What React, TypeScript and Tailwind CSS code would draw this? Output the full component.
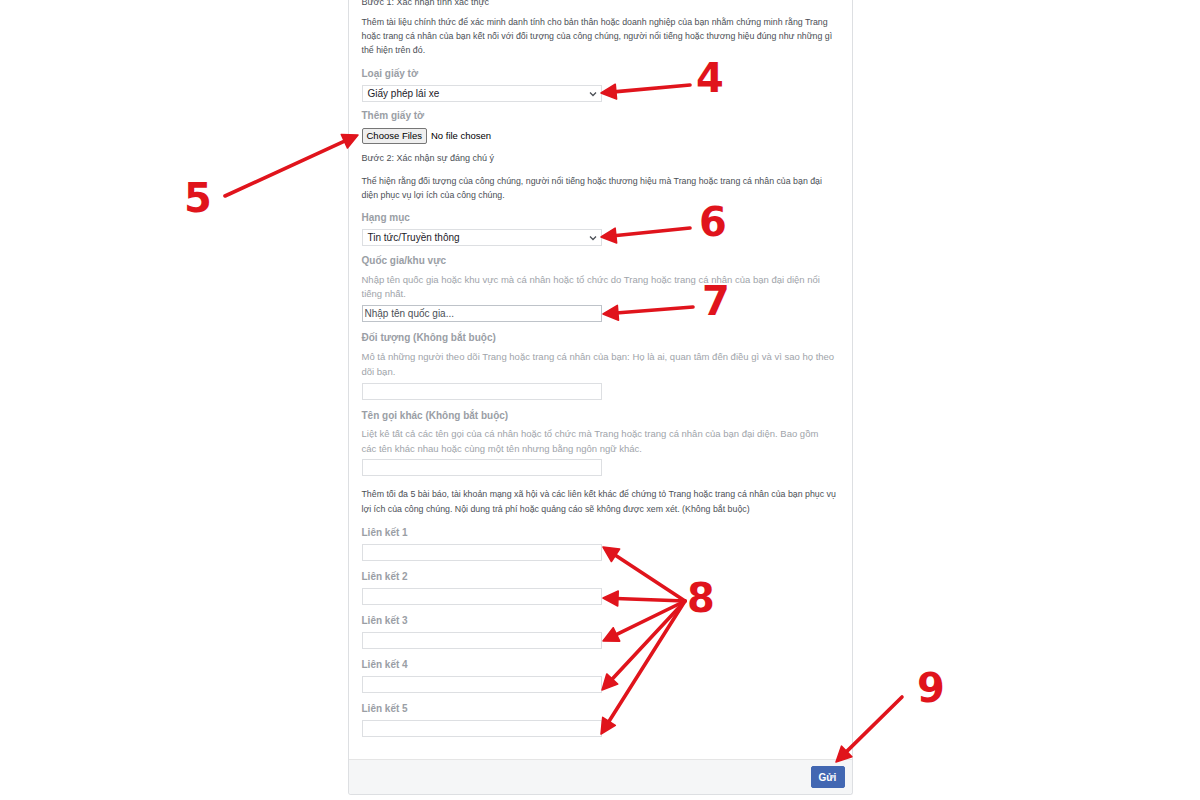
import React from "react";

const RED = "#e0141c";

function Arrow({ x1, y1, x2, y2 }: { x1: number; y1: number; x2: number; y2: number }) {
  const dx = x2 - x1;
  const dy = y2 - y1;
  const len = Math.sqrt(dx * dx + dy * dy);
  const ux = dx / len;
  const uy = dy / len;
  const hl = 15;
  const hw = 7.5;
  const bx = x2 - ux * hl;
  const by = y2 - uy * hl;
  const px = -uy;
  const py = ux;
  const pts = `${x2},${y2} ${bx + px * hw},${by + py * hw} ${bx - px * hw},${by - py * hw}`;
  return (
    <g>
      <line x1={x1} y1={y1} x2={bx + ux * 2} y2={by + uy * 2} stroke={RED} strokeWidth={3.6} strokeLinecap="round" />
      <polygon points={pts} fill={RED} stroke={RED} strokeWidth={1.5} strokeLinejoin="round" />
    </g>
  );
}

function Label({ children, mt }: { children: React.ReactNode; mt: string }) {
  return <div className={`${mt} text-[10px] leading-[14px] font-bold text-[#9a9ea5]`}>{children}</div>;
}

function TextInput({ mt, value }: { mt: string; value?: string }) {
  return (
    <div className={`${mt} w-[240px] h-[17px] border border-[#dddfe2] bg-white flex items-center px-[2px] text-[10px] text-[#4b4f56]`}>
      {value}
    </div>
  );
}

function Select({ mt, value }: { mt: string; value: string }) {
  return (
    <div className={`${mt} w-[240px] h-[17px] border border-[#dddfe2] bg-white flex items-center justify-between pl-[5px] pr-[4px] text-[10px] text-[#1d2129]`}>
      <span>{value}</span>
      <svg width="8" height="6" viewBox="0 0 8 6">
        <path d="M1 1.5 L4 4.5 L7 1.5" fill="none" stroke="#4b4f56" strokeWidth="1.3" />
      </svg>
    </div>
  );
}

export default function App() {
  return (
    <div className="relative w-full h-[800px] overflow-hidden bg-white" style={{ fontFamily: '"Liberation Sans", Arial, sans-serif' }}>
      <div className="mx-auto w-[505px] -mt-[5px] border-x border-b border-[#dddfe2] rounded-b-[3px] bg-white">
        <div className="pl-[13px] pr-[12px] pb-[22px]">
          <div className="text-[9px] leading-[14px] text-[#4b4f56]">Bước 1: Xác nhận tính xác thực</div>
          <div className="mt-[6px] text-[8.8px] leading-[14px] text-[#4b4f56]">
            <div className="whitespace-nowrap">Thêm tài liệu chính thức để xác minh danh tính cho bản thân hoặc doanh nghiệp của bạn nhằm chứng minh rằng Trang</div>
            <div className="whitespace-nowrap">hoặc trang cá nhân của bạn kết nối với đối tượng của công chúng, người nổi tiếng hoặc thương hiệu đúng như những gì</div>
            <div className="whitespace-nowrap">thể hiện trên đó.</div>
          </div>

          <Label mt="mt-[10px]">Loại giấy tờ</Label>
          <Select mt="mt-[4px]" value="Giấy phép lái xe" />

          <Label mt="mt-[7px]">Thêm giấy tờ</Label>
          <div className="mt-[5px] flex items-center h-[16px]">
            <div className="h-[16px] px-[4px] flex items-center border border-[#767676] rounded-[2px] bg-[#efefef] text-[9.5px] text-black">Choose Files</div>
            <span className="ml-[4px] text-[9.5px] text-black">No file chosen</span>
          </div>

          <div className="mt-[7px] text-[9px] leading-[14px] text-[#4b4f56]">Bước 2: Xác nhận sự đáng chú ý</div>
          <div className="mt-[9px] text-[8.8px] leading-[14px] text-[#4b4f56]">
            <div className="whitespace-nowrap">Thể hiện rằng đối tượng của công chúng, người nổi tiếng hoặc thương hiệu mà Trang hoặc trang cá nhân của bạn đại</div>
            <div className="whitespace-nowrap">diện phục vụ lợi ích của công chúng.</div>
          </div>

          <Label mt="mt-[9px]">Hạng mục</Label>
          <Select mt="mt-[4px]" value="Tin tức/Truyền thông" />

          <Label mt="mt-[8px]">Quốc gia/khu vực</Label>
          <div className="mt-[5px] text-[9.5px] leading-[14px] text-[#a0a4aa]">
            <div className="whitespace-nowrap">Nhập tên quốc gia hoặc khu vực mà cá nhân hoặc tổ chức do Trang hoặc trang cá nhân của bạn đại diện nổi</div>
            <div className="whitespace-nowrap">tiếng nhất.</div>
          </div>
          <div className="mt-[4px] w-[240px] h-[17px] border border-[#bec3c9] bg-white flex items-center px-[2px] text-[10px] text-[#4b4f56]">Nhập tên quốc gia...</div>

          <Label mt="mt-[9px]">Đối tượng (Không bắt buộc)</Label>
          <div className="mt-[4px] text-[9.5px] leading-[15px] text-[#a0a4aa]">
            <div className="whitespace-nowrap">Mô tả những người theo dõi Trang hoặc trang cá nhân của bạn: Họ là ai, quan tâm đến điều gì và vì sao họ theo</div>
            <div className="whitespace-nowrap">dõi bạn.</div>
          </div>
          <TextInput mt="mt-[4px]" />

          <Label mt="mt-[9px]">Tên gọi khác (Không bắt buộc)</Label>
          <div className="mt-[3px] text-[9.5px] leading-[15px] text-[#a0a4aa]">
            <div className="whitespace-nowrap">Liệt kê tất cả các tên gọi của cá nhân hoặc tổ chức mà Trang hoặc trang cá nhân của bạn đại diện. Bao gồm</div>
            <div className="whitespace-nowrap">các tên khác nhau hoặc cùng một tên nhưng bằng ngôn ngữ khác.</div>
          </div>
          <TextInput mt="mt-[3px]" />

          <div className="mt-[11px] text-[8.8px] leading-[15px] text-[#4b4f56]">
            <div className="whitespace-nowrap">Thêm tối đa 5 bài báo, tài khoản mạng xã hội và các liên kết khác để chứng tỏ Trang hoặc trang cá nhân của bạn phục vụ</div>
            <div className="whitespace-nowrap">lợi ích của công chúng. Nội dung trả phí hoặc quảng cáo sẽ không được xem xét. (Không bắt buộc)</div>
          </div>

          <Label mt="mt-[9px]">Liên kết 1</Label>
          <TextInput mt="mt-[4px]" />
          <Label mt="mt-[9px]">Liên kết 2</Label>
          <TextInput mt="mt-[4px]" />
          <Label mt="mt-[9px]">Liên kết 3</Label>
          <TextInput mt="mt-[4px]" />
          <Label mt="mt-[9px]">Liên kết 4</Label>
          <TextInput mt="mt-[4px]" />
          <Label mt="mt-[9px]">Liên kết 5</Label>
          <TextInput mt="mt-[4px]" />
        </div>
        <div className="h-[35px] bg-[#f5f6f7] border-t border-[#e5e5e5] flex items-center justify-end pr-[7px] rounded-b-[3px]">
          <div className="h-[22px] w-[34px] bg-[#4267b2] border border-[#4267b2] rounded-[2px] flex items-center justify-center text-[10px] font-bold text-white">Gửi</div>
        </div>
      </div>

      <svg className="absolute left-0 top-0 pointer-events-none" width="1200" height="800" viewBox="0 0 1200 800">
        <Arrow x1={690} y1={85} x2={601} y2={93} />
        <Arrow x1={225} y1={196} x2={358} y2={135} />
        <Arrow x1={690} y1={228} x2={601} y2={237} />
        <Arrow x1={693} y1={307} x2={603} y2={314} />
        <Arrow x1={685} y1={601} x2={603} y2={547} />
        <Arrow x1={685} y1={601} x2={603} y2={598} />
        <Arrow x1={685} y1={601} x2={603} y2={641} />
        <Arrow x1={685} y1={601} x2={602} y2={690} />
        <Arrow x1={685} y1={601} x2={601} y2={734} />
        <Arrow x1={902} y1={697} x2={836} y2={762} />
        <g fill={RED} fontFamily='"DejaVu Sans", sans-serif' fontWeight="bold" fontSize="40">
          <text x="696" y="92">4</text>
          <text x="184" y="212">5</text>
          <text x="699" y="236">6</text>
          <text x="702" y="315">7</text>
          <text x="687" y="612">8</text>
          <text x="917" y="702">9</text>
        </g>
      </svg>
    </div>
  );
}
